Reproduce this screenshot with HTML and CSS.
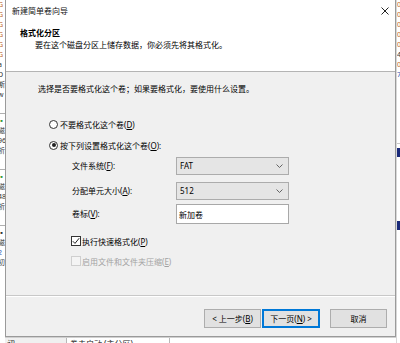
FILE: index.html
```html
<!DOCTYPE html>
<html lang="zh-CN">
<head>
<meta charset="utf-8">
<title>新建简单卷向导</title>
<link rel="stylesheet" href="styles.css">
</head>
<body>
<div class="desktop">
  <div class="strip strip-left">
    <div class="srow o">G</div><div class="srow o">G</div><div class="srow o">G</div><div class="srow o">G</div><div class="srow o">G</div><div class="srow o">G</div>
    <div class="srow">a</div><div class="srow">D</div><div class="srow">斯</div><div class="srow">w</div>
    <div class="sgap"></div>
    <div class="srow g">▪</div><div class="srow">磁</div><div class="srow">96</div><div class="srow">析</div>
    <div class="sgap"></div>
    <div class="srow g">▪</div><div class="srow">磁</div><div class="srow">48</div><div class="srow">析</div>
    <div class="sgap"></div>
    <div class="srow">▪</div><div class="srow">磁</div><div class="srow b">2</div><div class="srow">初</div>
  </div>
  <div class="center">
    <div class="dialog">
      <div class="titlebar">
        <span class="title">新建简单卷向导</span>
        <svg class="close" width="8" height="8" viewBox="0 0 8 8"><path d="M0.5 0.5 L7.5 7.5 M7.5 0.5 L0.5 7.5" stroke="#222" stroke-width="1" fill="none"/></svg>
      </div>
      <div class="header">
        <div class="h-title">格式化分区</div>
        <div class="h-sub">要在这个磁盘分区上储存数据，你必须先将其格式化。</div>
      </div>
      <div class="body">
        <div class="intro">选择是否要格式化这个卷；如果要格式化，要使用什么设置。</div>
        <div class="radio-row first"><span class="radio"></span><span>不要格式化这个卷(<u>D</u>)</span></div>
        <div class="radio-row"><span class="radio checked"></span><span>按下列设置格式化这个卷(<u>O</u>):</span></div>
        <div class="fields">
          <div class="field"><span class="flabel">文件系统(<u>F</u>):</span><div class="combo"><span>FAT</span><svg width="7" height="4" viewBox="0 0 7 4"><path d="M0.5 0.5 L3.5 3.5 L6.5 0.5" stroke="#555" fill="none" stroke-width="0.9"/></svg></div></div>
          <div class="field f2"><span class="flabel">分配单元大小(<u>A</u>):</span><div class="combo"><span>512</span><svg width="7" height="4" viewBox="0 0 7 4"><path d="M0.5 0.5 L3.5 3.5 L6.5 0.5" stroke="#555" fill="none" stroke-width="0.9"/></svg></div></div>
          <div class="field f3"><span class="flabel">卷标(<u>V</u>):</span><div class="textbox">新加卷</div></div>
        </div>
        <div class="check-row first"><span class="checkbox"><svg width="8" height="8" viewBox="0 0 8 8"><path d="M0.8 4.2 L3 6.4 L7.2 1.2" stroke="#222" stroke-width="1" fill="none"/></svg></span><span>执行快速格式化(<u>P</u>)</span></div>
        <div class="check-row disabled"><span class="checkbox"></span><span>启用文件和文件夹压缩(<u>E</u>)</span></div>
      </div>
      <div class="footer">
        <div class="btn-pair">
          <button class="btn">&lt; 上一步(<u>B</u>)</button>
          <button class="btn default">下一页(<u>N</u>) &gt;</button>
        </div>
        <button class="btn">取消</button>
      </div>
    </div>
    <div class="bottom-strip">
      <div class="bcell c1">初</div>
      <div class="bcell c2">卷未启动 (主分区)</div>
      <div class="bcell c3"></div>
    </div>
  </div>
  <div class="strip strip-right">
    <div class="srow o">0</div><div class="srow o">0</div><div class="srow o">0</div><div class="srow o">0</div><div class="srow o">0</div><div class="srow">4</div><div class="srow o">0</div><div class="srow b">7</div>
    <div class="rgap"></div>
    <div class="rbar"></div>
    <div class="rgap2"></div>
    <div class="rbar"></div>
  </div>
</div>
</body>
</html>
```

FILE: styles.css
```css
* { box-sizing: border-box; }
html, body { margin: 0; padding: 0; }
body {
  width: 400px;
  height: 343px;
  overflow: hidden;
  background: #fff;
  font-family: "Noto Sans", "Noto Sans CJK SC", sans-serif;
  font-size: 8px;
  color: #000;
}
u { text-decoration: underline; text-underline-offset: 1px; }

.desktop {
  display: flex;
  width: 400px;
  height: 343px;
  overflow: hidden;
}

/* background window slivers */
.strip {
  overflow: hidden;
  background: #fff;
  font-size: 7px;
  line-height: 10px;
  color: #333;
}
.strip-left { width: 5px; flex: none; }
.strip-left .srow { height: 10px; overflow: hidden; margin-left: -2px; white-space: nowrap; }
.strip-right { width: 4px; flex: none; border-left: 1px solid #d8d8d8; }
.strip-right .srow { height: 10px; overflow: hidden; white-space: nowrap; }
.srow.o { color: #c0682a; }
.srow.g { color: #3a9a3a; }
.srow.b { color: #2050b0; }
.sgap { height: 14px; border-bottom: 1px solid #b0b0b0; margin-bottom: 2px; }
.rgap { height: 64px; border-bottom: 1px solid #c8c8c8; }
.rbar { height: 9px; background: #1a2a7a; margin-top: 4px; }
.rgap2 { height: 60px; }

.center {
  width: 391px;
  flex: none;
  display: flex;
  flex-direction: column;
}

.dialog {
  height: 337px;
  flex: none;
  display: flex;
  flex-direction: column;
  border-left: 1px solid #9a9a9a;
  border-right: 1px solid #9a9a9a;
  border-bottom: 1px solid #9a9a9a;
  background: #f0f0f0;
}

.titlebar {
  height: 22px;
  background: #fff;
  display: flex;
  align-items: center;
  justify-content: space-between;
  padding: 0 6px 0 6px;
}
.title { line-height: 12px; color: #111; }
.close { display: block; }

.header {
  height: 50px;
  background: #fff;
  border-bottom: 1px solid #b4b4b4;
  padding: 5px 0 0 14px;
}
.h-title { font-weight: bold; line-height: 12px; }
.h-sub { line-height: 12px; padding-left: 15px; }

.body {
  height: 223px;
  padding: 11px 0 0 32px;
  display: flex;
  flex-direction: column;
}
.intro { line-height: 12px; }

.radio-row {
  display: flex;
  align-items: center;
  height: 12px;
  padding-left: 11px;
  margin-top: 9px;
}
.radio-row.first { margin-top: 23px; }
.radio {
  width: 9px;
  height: 9px;
  border: 1px solid #333;
  border-radius: 50%;
  background: #fff;
  margin-right: 2px;
  display: flex;
  align-items: center;
  justify-content: center;
  flex: none;
}
.radio.checked::after {
  content: "";
  width: 4px;
  height: 4px;
  border-radius: 50%;
  background: #222;
}

.fields {
  padding-left: 34px;
  margin-top: 6px;
  display: flex;
  flex-direction: column;
}
.field {
  display: flex;
  align-items: center;
  height: 18px;
}
.field.f2 { margin-top: 7px; }
.field.f3 { margin-top: 4px; height: 20px; }
.flabel { width: 104px; line-height: 12px; }
.combo {
  width: 113px;
  height: 18px;
  background: #e5e5e5;
  border: 1px solid #acacac;
  display: flex;
  align-items: center;
  justify-content: space-between;
  padding: 0 5px 0 3px;
  line-height: 12px;
}
.combo svg { display: block; }
.textbox {
  width: 113px;
  height: 20px;
  background: #fff;
  border: 1px solid #a8a8a8;
  padding: 0 2px;
  display: flex;
  align-items: center;
}

.check-row {
  display: flex;
  align-items: center;
  height: 12px;
  padding-left: 33px;
  margin-top: 8px;
}
.check-row.first { margin-top: 11px; }
.checkbox {
  width: 10px;
  height: 10px;
  border: 1px solid #333;
  background: #fff;
  margin-right: 1px;
  display: flex;
  align-items: center;
  justify-content: center;
  flex: none;
}
.checkbox svg { display: block; }
.check-row.disabled { color: #a2a2a2; }
.check-row.disabled .checkbox { border-color: #cfcfcf; background: #f4f4f4; }

.footer {
  height: 41px;
  border-top: 1px solid #c8c8c8;
  box-shadow: inset 0 1px 0 #fff;
  display: flex;
  justify-content: flex-end;
  align-items: flex-start;
  padding: 13px 8px 0 0;
  gap: 10px;
}
.btn-pair { display: flex; gap: 1px; }
.btn {
  width: 57px;
  height: 19px;
  margin: 0;
  padding: 0;
  background: #e1e1e1;
  border: 1px solid #adadad;
  font-family: "Noto Sans", "Noto Sans CJK SC", sans-serif;
  font-size: 8px;
  line-height: 12px;
  color: #000;
}
.btn.default {
  width: 58px;
  border: 1px solid #0078d7;
  box-shadow: inset 0 0 0 1px #0078d7;
}

.bottom-strip {
  flex: 1;
  display: flex;
  background: #f0f0f0;
  border-top: 1px solid #d0d0d0;
  font-size: 8px;
  line-height: 10px;
  overflow: hidden;
  color: #222;
}
.bcell { padding-top: 1px; white-space: nowrap; overflow: hidden; }
.bcell.c1 { width: 62px; border-right: 1px solid #b8b8b8; padding-left: 2px; }
.bcell.c2 { width: 103px; border-right: 1px solid #b8b8b8; padding-left: 3px; background: #fff; }
.bcell.c3 { flex: 1; background: #fff; }
```
